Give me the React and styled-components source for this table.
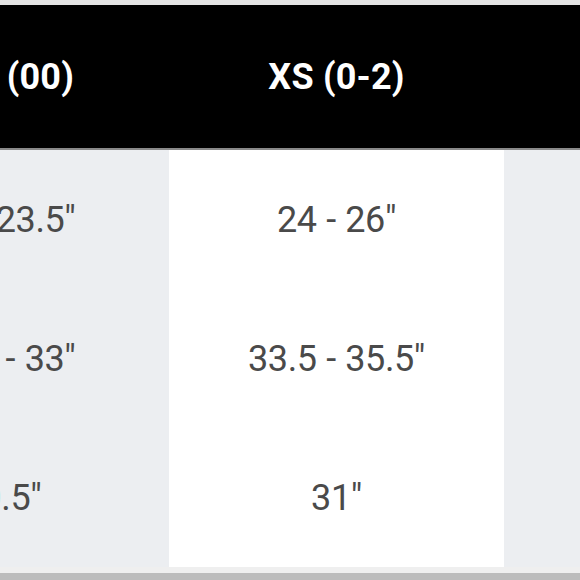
import styled, { createGlobalStyle } from "styled-components";

const GlobalStyle = createGlobalStyle`
  html, body {
    margin: 0;
    padding: 0;
    background: #ffffff;
  }
  body {
    font-family: Roboto, "Liberation Sans", sans-serif;
  }
`;

const Page = styled.div`
  width: 580px;
  height: 580px;
  overflow: hidden;
  display: flex;
  flex-direction: column;
  background: #ffffff;
`;

const TopStrip = styled.div`
  height: 5px;
  background: #e4e4e4;
  flex-shrink: 0;
`;

// the chart is wider than the window: first column is partly scrolled off
const Table = styled.div`
  display: grid;
  grid-template-columns: repeat(3, 335px);
  margin-left: -166px;
  width: max-content;
`;

const HeadCell = styled.div`
  height: 143px;
  background: #000000;
  border-bottom: 2px solid #8a8a8a;
  display: flex;
  align-items: center;
  justify-content: center;
  color: #ffffff;
  font-weight: 700;
  font-size: 36px;
  letter-spacing: 0.2px;
  white-space: nowrap;
`;

const Cell = styled.div`
  height: 139px;
  background: ${(p) => (p.$shade ? "#eceef1" : "#ffffff")};
  display: flex;
  align-items: center;
  justify-content: center;
  color: #4a4a4a;
  font-weight: 400;
  font-size: 36px;
  letter-spacing: -0.4px;
  word-spacing: 1px;
  white-space: nowrap;
`;

const BottomEdge = styled.div`
  height: 6px;
  background: #efefef;
  flex-shrink: 0;
`;

const BottomBar = styled.div`
  flex: 1;
  background: #bcbcbc;
`;

const sizes = ["XXS (00)", "XS (0-2)", "S (4-6)"];
const rows = [
  ["22 - 23.5\u2033", "24 - 26\u2033", "26.5 - 28.5\u2033"],
  ["30.5 - 33\u2033", "33.5 - 35.5\u2033", "36 - 38\u2033"],
  ["30.5\u2033", "31\u2033", "31.5\u2033"],
];

export default function App() {
  return (
    <Page>
      <GlobalStyle />
      <TopStrip />
      <Table>
        {sizes.map((s) => (
          <HeadCell key={s}>{s}</HeadCell>
        ))}
        {rows.map((row, r) =>
          row.map((val, c) => (
            <Cell key={r + "-" + c} $shade={c !== 1}>
              {val}
            </Cell>
          ))
        )}
      </Table>
      <BottomEdge />
      <BottomBar />
    </Page>
  );
}
